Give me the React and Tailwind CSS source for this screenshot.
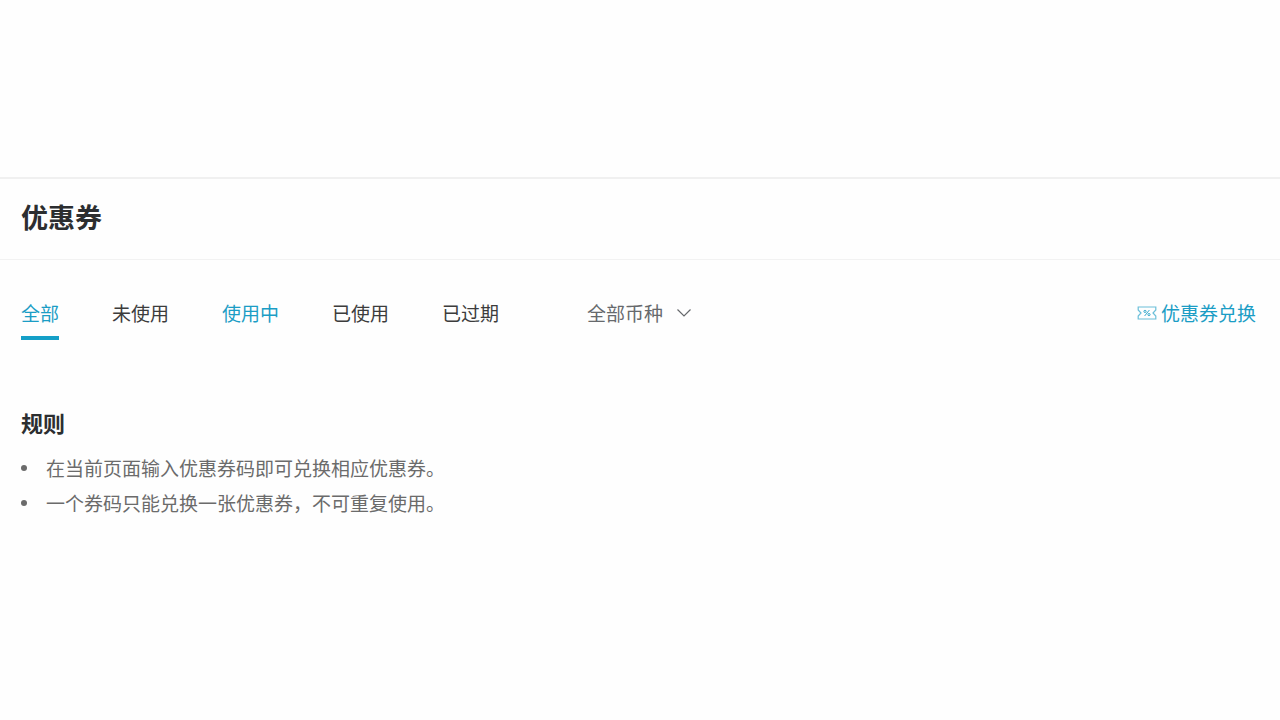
import { clsx } from 'clsx';

const tabs = [
  { id: 'all', label: '全部' },
  { id: 'unused', label: '未使用' },
  { id: 'active', label: '使用中', highlighted: true },
  { id: 'used', label: '已使用' },
  { id: 'expired', label: '已过期' },
];

const rules = [
  '在当前页面输入优惠券码即可兑换相应优惠券。',
  '一个券码只能兑换一张优惠券，不可重复使用。',
];

function CouponIcon() {
  return (
    <svg
      className="w-5 h-4 shrink-0"
      viewBox="0 0 20 16"
      fill="none"
      stroke="currentColor"
      aria-hidden="true"
    >
      <path
        d="M1.2 2h17.6v3L16 8l2.8 3v3H1.2v-3L4 8 1.2 5z"
        strokeWidth="1.2"
        strokeOpacity="0.65"
      />
      <path d="M12.4 5l-4.8 6" strokeOpacity="0.85" />
      <circle cx="8" cy="6.4" r="1.1" strokeOpacity="0.85" />
      <circle cx="12" cy="9.6" r="1.1" strokeOpacity="0.85" />
    </svg>
  );
}

function CurrencySelect() {
  return (
    <div className="relative text-[#66696c]">
      <select
        aria-label="币种"
        className="block w-[104px] h-7 appearance-none bg-transparent text-[19px] leading-7 cursor-pointer"
      >
        <option>全部币种</option>
      </select>
      <svg
        className="absolute right-0 top-2 w-3.5 h-3 pointer-events-none"
        viewBox="0 0 14 12"
        fill="none"
        stroke="currentColor"
        strokeWidth="1.2"
        aria-hidden="true"
      >
        <path d="M0.5 2.5L7 9l6.500-6.500" />
      </svg>
    </div>
  );
}

export default function App() {
  return (
    <main className="min-h-screen bg-[#fefefe] pt-[177px] font-['Noto_Sans_CJK_SC',sans-serif] text-[#2c2e30]">
      <header className="border-y border-t-2 border-t-[#f0f0f0] border-b-[#f2f2f2] px-[21px] pt-[18px] pb-[23px]">
        <h1 className="text-[27px] leading-[39px] font-bold">优惠券</h1>
      </header>

      <div className="flex items-start px-[21px] pt-[39px] pr-6">
        <nav className="flex gap-[53px]">
          {tabs.map((tab, index) => (
            <button
              key={tab.id}
              type="button"
              className={clsx(
                'border-b-4 pb-[9px] text-[19px] leading-7 cursor-pointer',
                index === 0 ? 'border-[#149fc7]' : 'border-transparent',
                (index === 0 || tab.highlighted) ? 'text-[#1b9dc5]' : 'text-[#3c3c3c]'
              )}
            >
              {tab.label}
            </button>
          ))}
        </nav>

        <div className="ml-[88px]">
          <CurrencySelect />
        </div>

        <a href="#redeem" className="ml-auto flex items-center gap-1 text-[19px] leading-7 text-[#1b9dc5]">
          <CouponIcon />
          优惠券兑换
        </a>
      </div>

      {/* Redemption rules */}
      <section className="px-[21px] pt-[66px]">
        <h2 className="text-[22px] leading-8 font-bold">规则</h2>
        <ul className="mt-3 text-[19px] leading-[35px] text-[#6b6b6b]">
          {rules.map((rule) => (
            <li key={rule} className="flex items-center gap-[19px]">
              <span className="w-1.5 h-1.5 rounded-full bg-current" />
              {rule}
            </li>
          ))}
        </ul>
      </section>
    </main>
  );
}
